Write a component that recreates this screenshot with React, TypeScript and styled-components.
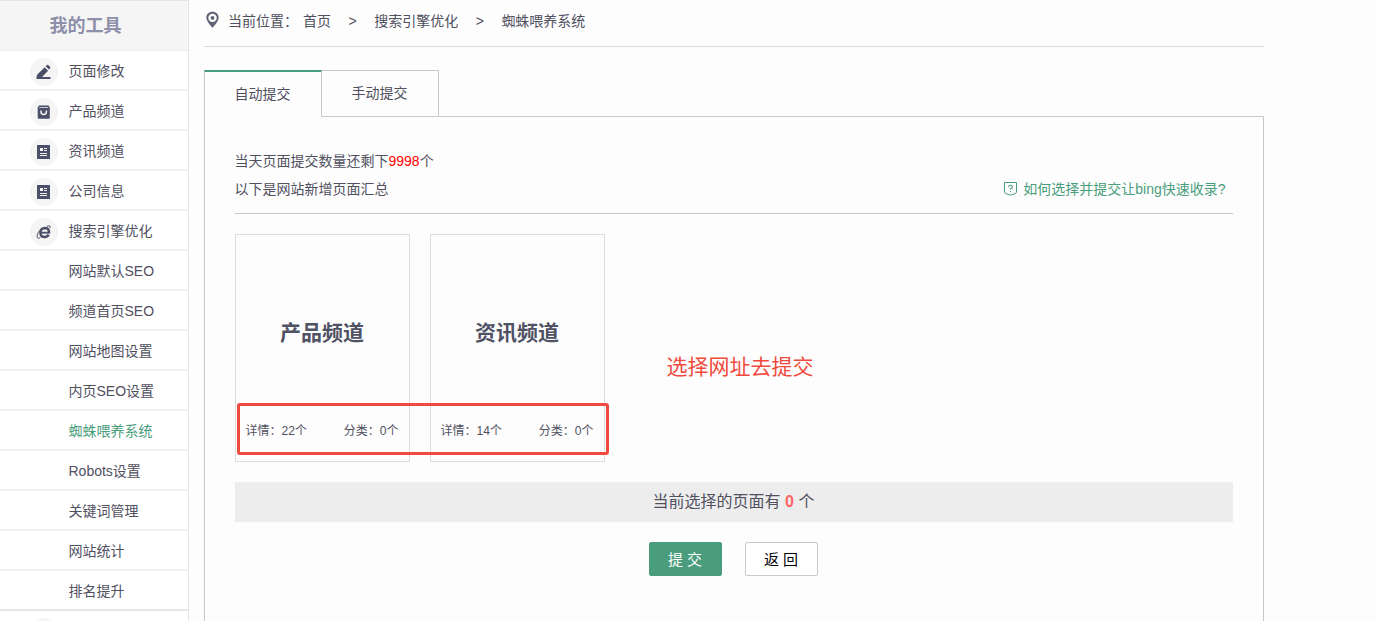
import React from "react";
import styled, { createGlobalStyle } from "styled-components";

const GlobalStyle = createGlobalStyle`
  * { box-sizing: border-box; }
  body {
    margin: 0;
    background: #fdfdfd;
    color: #50505f;
    font: 14px/20px "Liberation Sans", "Noto Sans CJK SC", sans-serif;
    overflow: hidden;
  }
`;

const Page = styled.div`
  display: flex;
  height: 621px;
  overflow: hidden;
`;

const Sidebar = styled.nav`
  flex: none;
  width: 189px;
  height: 640px;
  border-top: 1px solid #e4e4e4;
  border-right: 1px solid #e4e4e4;
  background: #fff;
`;

const SidebarTitle = styled.h1`
  margin: 0;
  height: 50px;
  padding: 0 17px 0 0;
  background: #f5f5f5;
  border-bottom: 1px solid #f0f0f0;
  color: #8e8fa9;
  font-size: 18px;
  line-height: 51px;
  text-align: center;
`;

const MenuItem = styled.a<{ $active?: boolean; $last?: boolean }>`
  display: flex;
  height: 40px;
  padding-left: 30px;
  border-bottom: 2px solid ${(p) => (p.$last ? "#e6e6e6" : "#f2f2f2")};
  color: ${(p) => (p.$active ? "#4a9d7c" : "#50505f")};
  line-height: 41px;
  white-space: nowrap;
`;

const IconSlot = styled.span<{ $filled?: boolean }>`
  flex: none;
  display: flex;
  align-items: center;
  justify-content: center;
  width: 28px;
  height: 28px;
  margin: 7px 10.500px 0 0;
  border-radius: 50%;
  background: ${(p) => (p.$filled ? "#f5f5f5" : "transparent")};
`;

const Main = styled.main`
  width: 1060px;
  margin-left: 15px;
`;

const Breadcrumb = styled.div`
  display: flex;
  height: 47px;
  padding: 11px 0 0 2px;
  border-bottom: 1px solid #dcdcdc;
  white-space: nowrap;
`;

const PinSlot = styled.span`
  display: flex;
  width: 22px;
`;

const CrumbLabel = styled.span`
  width: 75px;
`;

const CrumbArrow = styled.span`
  width: 43.200px;
  text-align: center;
`;

const Tabs = styled.div`
  display: flex;
  height: 46px;
  margin-top: 23px;
`;

const Tab = styled.div<{ $active?: boolean }>`
  width: ${(p) => (p.$active ? 118 : 117)}px;
  height: ${(p) => (p.$active ? 47 : 46)}px;
  position: relative;
  border: 1px solid #c9c9c9;
  border-width: ${(p) => (p.$active ? "2px 1px 0" : "1px 1px 0 0")};
  border-top-color: ${(p) => (p.$active ? "#4a9d7c" : "#c9c9c9")};
  background: #fdfdfd;
  line-height: 44px;
  text-align: center;
  padding-right: 1px;
`;

const Panel = styled.section`
  height: 540px;
  padding: 30px 30px 0;
  border: 1px solid #c9c9c9;
`;

const Summary = styled.div`
  display: flex;
  justify-content: space-between;
  align-items: flex-end;
  height: 67px;
  padding-bottom: 10px;
  border-bottom: 1px solid #c9c9c9;
  line-height: 28px;
`;

const SummaryText = styled.div`
  margin-left: -0.500px;
`;

const Remaining = styled.span`
  color: #f00;
`;

const HelpLink = styled.a`
  display: flex;
  align-items: center;
  gap: 6px;
  padding-right: 7.500px;
  color: #4a9d7c;
`;

const Cards = styled.div`
  position: relative;
  display: flex;
  gap: 20px;
  margin-top: 20px;
`;

const Card = styled.article`
  width: 175px;
  height: 228px;
  border: 1px solid #dcdcdc;
`;

const CardName = styled.h2`
  margin: 0;
  height: 180px;
  padding-top: 83px;
  font-size: 21px;
  line-height: 30px;
  text-align: center;
  padding-right: 1px;
  color: #4f5164;
`;

const CardStats = styled.div`
  display: flex;
  justify-content: space-between;
  padding: 6px 10.500px 0 9.500px;
  font-size: 12px;
`;

const Highlight = styled.div`
  position: absolute;
  left: 2px;
  top: 169px;
  width: 372px;
  height: 52px;
  border: 3px solid #f04a3e;
  border-radius: 3px;
`;

const Note = styled.div`
  position: absolute;
  left: 431.500px;
  top: 118px;
  color: #f04a3e;
  font-size: 21px;
  line-height: 30px;
`;

const Selected = styled.div`
  height: 40px;
  margin-top: 20px;
  padding-right: 1px;
  background: #ededed;
  font-size: 16px;
  line-height: 40px;
  text-align: center;
`;

const Count = styled.b`
  color: #ff6464;
`;

const Actions = styled.div`
  display: flex;
  gap: 23px;
  padding: 20px 0 0 414px;
`;

const Button = styled.button<{ $primary?: boolean }>`
  width: 73px;
  height: 34px;
  padding: 1px 1px 0 0;
  border: 1px solid ${(p) => (p.$primary ? "#4a9d7c" : "#c9c9c9")};
  border-radius: 2px;
  background: ${(p) => (p.$primary ? "#4a9d7c" : "#fff")};
  color: ${(p) => (p.$primary ? "#fff" : "#000")};
  font: 15px/31px "Liberation Sans", "Noto Sans CJK SC", sans-serif;
`;

const INK = "#4b5068";

const PencilIcon = () => (
  <svg width="16" height="16" viewBox="0 0 16 16" fill={INK}>
    <path d="M.500 15v-2.300l.8-2.300L8.700 3.200l3.400 3.500-6 6.300H14.500v2z M9.700 2.300l1.300-1.200q.6-.5 1.200 0l2 1.900q.5.6 0 1.200l-1.200 1.300z" />
  </svg>
);

const BagIcon = () => (
  <svg width="14" height="14" viewBox="0 0 14 14">
    <path fill={INK} d="M2 .500h9.500l1.300 2v10.200q0 1-1 1H1.700q-1 0-1-1V2.500z" />
    <path stroke="#d5d7de" strokeWidth=".9" d="M2.200 2.500h9" />
    <path fill="none" stroke="#f5f5f5" strokeWidth="1.500" d="M4 5.500v1.300a2.700 2.700 0 0 0 5.400 0V5.500" />
  </svg>
);

const NewsIcon = () => (
  <svg width="14" height="14" viewBox="0 0 14 14">
    <rect x="0" y="0" width="13" height="14" rx=".5" fill={INK} />
    <path fill="#f5f5f5" d="M3 3h3v3H3z M7 3h3v1H7z M7 5h3v1H7z M3 8h7v1H3z M3 10h7v1H3z" />
  </svg>
);

const BrowserIcon = () => (
  <svg width="16" height="16" viewBox="0 0 16 16" fill="none" stroke={INK}>
    <path strokeWidth="2.500" d="M13 8.300q0-4.400-4-4.400-4.300.2-4.600 4.500-.1 4.500 4.200 4.500 2.900 0 4.100-2.300" />
    <path strokeWidth="1.900" d="M5 8.700h9.200" />
    <path strokeWidth="1" d="M11 2.300q2.300-1 2.900-.2.500.6 0 2M4.600 5.500Q1.700 8.200 1.200 11.600q-.3 2.500.9 2.600.9.100 2.200-.7" />
  </svg>
);

const PinIcon = () => (
  <svg width="14" height="18" viewBox="0 0 14 18">
    <path
      fill="#626376"
      fillRule="evenodd"
      d="M6.500.800C2.800.800.300 3.300.300 6.800c0 3.700 6.200 10 6.200 10s6.200-6.300 6.200-10c0-3.500-2.500-6-6.200-6zM6.500 2.700a4.200 4.200 0 1 1 0 8.400 4.200 4.200 0 0 1 0-8.400z"
    />
    <circle cx="6.500" cy="6.900" r="1.900" fill="#626376" />
  </svg>
);

const HelpIcon = () => (
  <svg width="13" height="14" viewBox="0 0 13 14" fill="none" stroke="#4a9d7c">
    <path d="M.5.500h12v9.500q0 1-1 1.400l-5 1.800-5-1.800q-1-.4-1-1.400z" />
    <path strokeWidth="1.100" d="M4.600 5q0-1.700 1.900-1.700T8.400 5q0 .8-1 1.300-.9.500-.9 1.500M6.500 9v1.200" />
  </svg>
);

const menu: { label: string; icon?: React.ReactNode; active?: boolean }[] = [
  { label: "页面修改", icon: <PencilIcon /> },
  { label: "产品频道", icon: <BagIcon /> },
  { label: "资讯频道", icon: <NewsIcon /> },
  { label: "公司信息", icon: <NewsIcon /> },
  { label: "搜索引擎优化", icon: <BrowserIcon /> },
  { label: "网站默认SEO" },
  { label: "频道首页SEO" },
  { label: "网站地图设置" },
  { label: "内页SEO设置" },
  { label: "蜘蛛喂养系统", active: true },
  { label: "Robots设置" },
  { label: "关键词管理" },
  { label: "网站统计" },
  { label: "排名提升" },
];

const cards = [
  { name: "产品频道", details: 22, categories: 0 },
  { name: "资讯频道", details: 14, categories: 0 },
];

export default function App() {
  return (
    <Page>
      <GlobalStyle />
      <Sidebar>
        <SidebarTitle>我的工具</SidebarTitle>
        {menu.map((item, i) => (
          <MenuItem key={item.label} $active={item.active} $last={i === menu.length - 1}>
            <IconSlot $filled={!!item.icon}>{item.icon}</IconSlot>
            {item.label}
          </MenuItem>
        ))}
        <MenuItem>
          <IconSlot $filled />
        </MenuItem>
      </Sidebar>
      <Main>
        <Breadcrumb>
          <PinSlot>
            <PinIcon />
          </PinSlot>
          <CrumbLabel>当前位置：</CrumbLabel>
          <span>首页</span>
          <CrumbArrow>&gt;</CrumbArrow>
          <span>搜索引擎优化</span>
          <CrumbArrow>&gt;</CrumbArrow>
          <span>蜘蛛喂养系统</span>
        </Breadcrumb>
        <Tabs>
          <Tab $active>自动提交</Tab>
          <Tab>手动提交</Tab>
        </Tabs>
        <Panel>
          <Summary>
            <SummaryText>
              <div>
                当天页面提交数量还剩下<Remaining>9998</Remaining>个
              </div>
              <div>以下是网站新增页面汇总</div>
            </SummaryText>
            <HelpLink>
              <HelpIcon />
              如何选择并提交让bing快速收录?
            </HelpLink>
          </Summary>
          <Cards>
            {cards.map((card) => (
              <Card key={card.name}>
                <CardName>{card.name}</CardName>
                <CardStats>
                  <span>详情：{card.details}个</span>
                  <span>分类：{card.categories}个</span>
                </CardStats>
              </Card>
            ))}
            <Highlight />
            <Note>选择网址去提交</Note>
          </Cards>
          <Selected>
            当前选择的页面有 <Count>0</Count> 个
          </Selected>
          <Actions>
            <Button $primary>提 交</Button>
            <Button>返 回</Button>
          </Actions>
        </Panel>
      </Main>
    </Page>
  );
}
